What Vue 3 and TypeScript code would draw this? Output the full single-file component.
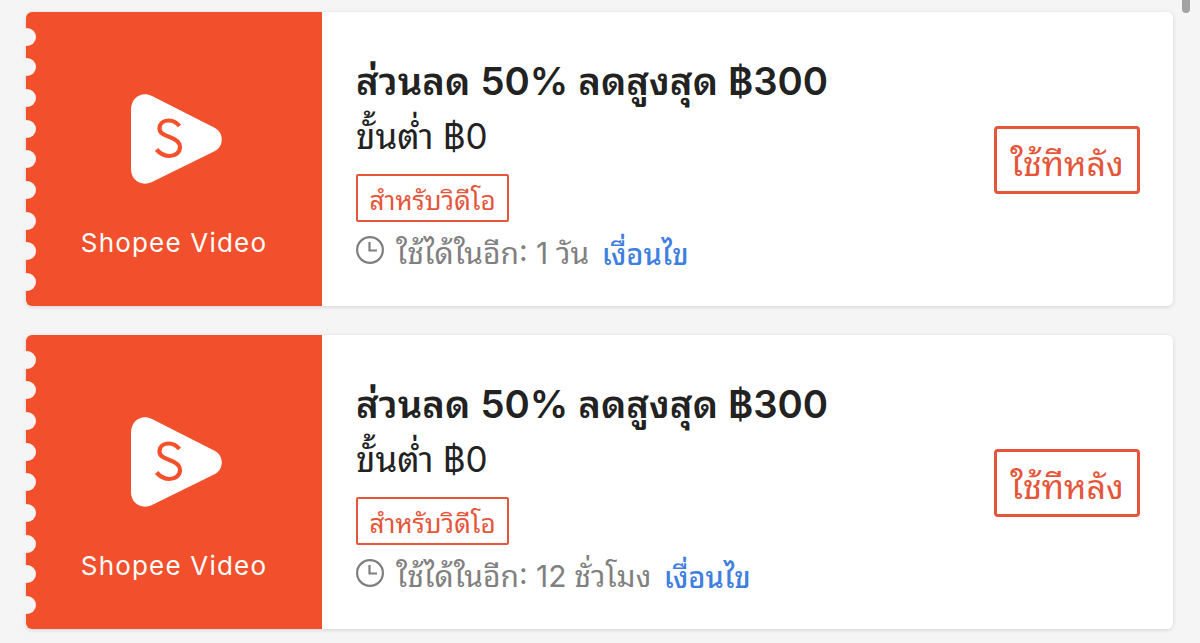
<script setup lang="ts">
const vouchers = [
  { id: 1, remain: '1', unit: 'วัน' },
  { id: 2, remain: '12', unit: 'ชั่วโมง' },
]
const notches = [1, 2, 3, 4, 5, 6, 7, 8, 9]
</script>

<template>
  <main class="page">
    <div class="scrollbar"></div>
    <section v-for="v in vouchers" :key="v.id" class="card">
      <div class="left">
        <div class="notches">
          <span v-for="n in notches" :key="n" class="notch"></span>
        </div>
        <svg class="logo" width="94" height="92" viewBox="0 0 94 92">
          <path d="M1 16 C1 4 11 -3 22 2 L85 34 C94 39 94 52 85 57 L22 88 C11 93 1 86 1 75 Z" fill="#fff" />
          <path d="M49.500 32 C46.500 28.500 43 26.500 39 26.500 C33 26.500 29.500 30 29.500 34.500 C29.500 39 33.500 41 39.500 43 C45.500 45 50 47.500 50 53 C50 58.500 45 62 39.500 62 C34.500 62 30 59.500 26.500 55.500" fill="none" stroke="#f3512c" stroke-width="4.200" />
        </svg>
        <div class="brand">Shopee Video</div>
      </div>
      <div class="body">
        <div class="info">
          <h2 class="title">ส่วนลด <span class="num">50%</span> ลดสูงสุด <span class="num">฿300</span></h2>
          <p class="min">ขั้นต่ำ <span class="num">฿0</span></p>
          <span class="tag">สำหรับวิดีโอ</span>
          <div class="expire">
            <svg class="clock" width="28" height="28" viewBox="0 0 28 28" fill="none" stroke="#7f7f7f" stroke-width="2.200">
              <circle cx="14" cy="14" r="12.900" />
              <path d="M13.500 6 V14.500 H21" />
            </svg>
            <span class="left-text">ใช้ได้ในอีก<span class="num">: {{ v.remain }}</span> {{ v.unit }}</span>
            <a class="terms">เงื่อนไข</a>
          </div>
        </div>
        <button class="later">ใช้ทีหลัง</button>
      </div>
    </section>
  </main>
</template>

<style scoped>
.page {
  position: relative;
  height: 643px;
  box-sizing: border-box;
  overflow: hidden;
  padding: 12px 27px 0 26px;
  background: #f5f5f5;
  display: flex;
  flex-direction: column;
  gap: 29px;
  font-family: "Noto Sans Thai Looped", Loma, Garuda, Waree, "Liberation Sans", sans-serif;
}
.scrollbar {
  position: absolute;
  top: 0;
  right: 10px;
  width: 8px;
  height: 13px;
  border-radius: 0 0 4px 4px;
  background: #a3a3a3;
}
.card {
  display: flex;
  flex: none;
  height: 294px;
  border-radius: 6px;
  box-shadow: 0 1px 4px rgba(0, 0, 0, 0.14);
}
.left {
  position: relative;
  width: 296px;
  flex: none;
  background: #f2502c;
  border-radius: 6px 0 0 6px;
  display: flex;
  flex-direction: column;
  align-items: center;
  color: #fff;
}
.notches {
  position: absolute;
  left: -8px;
  top: 15.500px;
  display: flex;
  flex-direction: column;
  gap: 12.700px;
}
.notch {
  width: 18px;
  height: 18px;
  border-radius: 50%;
  background: #f5f5f5;
}
.logo {
  margin-top: 82px;
  margin-left: 6px;
}
.brand {
  margin-top: 41px;
  font-family: Inter, sans-serif;
  font-size: 26px;
  line-height: 32px;
  letter-spacing: 1.200px;
}
.body {
  flex: 1;
  background: #fff;
  border-radius: 0 6px 6px 0;
  display: flex;
  justify-content: space-between;
  padding: 0 33px 0 34px;
}
.info {
  display: flex;
  flex-direction: column;
  align-items: flex-start;
  padding-top: 44px;
}
.num {
  font-family: Inter, sans-serif;
}
.title {
  margin: 0;
  font-size: 38.300px;
  line-height: 44px;
  font-weight: 600;
  color: #222;
}
.min {
  margin: 10px 0 0;
  font-size: 35px;
  line-height: 40px;
  color: #222;
}
.tag {
  margin-top: 18px;
  box-sizing: border-box;
  height: 48px;
  padding: 0 11.500px;
  display: flex;
  align-items: center;
  border: 2px solid #e5553a;
  border-radius: 2px;
  font-size: 26px;
  color: #e5553a;
}
.expire {
  margin-top: 9px;
  display: flex;
  align-items: center;
  font-size: 30px;
  line-height: 40px;
  color: #808080;
}
.clock {
  margin-top: -4px;
}
.left-text {
  margin-left: 12px;
}
.terms {
  margin-left: 12.500px;
  font-size: 29px;
  color: #3f7fe0;
  font-weight: 500;
}
.later {
  box-sizing: border-box;
  align-self: center;
  margin-top: 2px;
  width: 146px;
  height: 68px;
  padding: 0;
  background: #fff;
  border: 3px solid #e5553a;
  border-radius: 4px;
  font-family: inherit;
  font-size: 34px;
  color: #e5553a;
}
</style>
